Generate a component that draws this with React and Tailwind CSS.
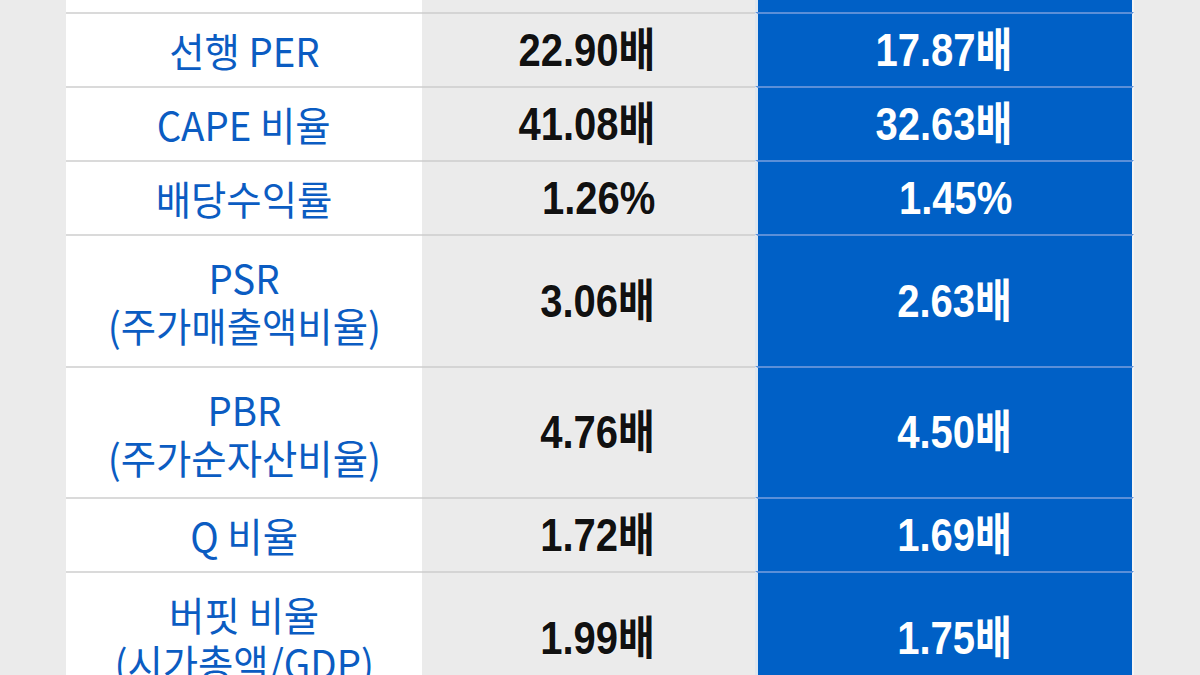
const rows = [
  { h: "h-[12px]", label: [], a: "", b: "" },
  { h: "h-[72px]", label: ["선행 PER"], a: "22.90배", b: "17.87배" },
  { h: "h-[72px]", label: ["CAPE 비율"], a: "41.08배", b: "32.63배" },
  { h: "h-[72px]", label: ["배당수익률"], a: "1.26%", b: "1.45%" },
  { h: "h-[130px]", label: ["PSR", "(주가매출액비율)"], a: "3.06배", b: "2.63배" },
  { h: "h-[129px]", label: ["PBR", "(주가순자산비율)"], a: "4.76배", b: "4.50배" },
  { h: "h-[72px]", label: ["Q 비율"], a: "1.72배", b: "1.69배" },
  { h: "h-[130px]", label: ["버핏 비율", "(시가총액/GDP)"], a: "1.99배", b: "1.75배" },
];

const labelFont = { fontFamily: '"Noto Sans CJK KR", "Noto Sans", sans-serif' };
const numFont = { fontFamily: '"Liberation Sans", "Noto Sans CJK KR", sans-serif' };

function Row({ row, first }) {
  const line = first ? "" : "border-t-2";
  return (
    <div className="grid grid-cols-[356px_333px_379px]">
      <div className={`${row.h} ${line} box-content border-[#dadada] bg-white flex flex-col items-center justify-center gap-[2px]`}>
        {row.label.map((t) => (
          <div
            key={t}
            className="scale-x-[0.96] text-[40px] leading-[46px] text-[#0b5cc2] text-center whitespace-nowrap"
            style={labelFont}
          >
            {t}
          </div>
        ))}
      </div>
      <div className={`${row.h} ${line} box-content border-[#d4d4d4] bg-[#ebebeb] flex items-center justify-end pr-[100px]`}>
        <span
          className="origin-right scale-x-[0.87] font-bold text-[46px] text-[#111] [text-shadow:0_0_2px_#fff]"
          style={numFont}
        >
          {row.a}
        </span>
      </div>
      <div className={`${row.h} ${line} box-content border-[#5b8fd8] bg-[#0060c6] border-l-[3px] border-l-[#dfe6ee] border-r-2 border-r-[#f4f4f4] flex items-center justify-end pr-[120px]`}>
        <span
          className="origin-right scale-x-[0.87] font-bold text-[46px] text-white"
          style={numFont}
        >
          {row.b}
        </span>
      </div>
    </div>
  );
}

export default function App() {
  return (
    <div className="w-[1200px] h-[675px] overflow-hidden bg-[#ebebeb] pl-[66px]">
      {rows.map((r, i) => (
        <Row key={i} row={r} first={i === 0} />
      ))}
    </div>
  );
}
